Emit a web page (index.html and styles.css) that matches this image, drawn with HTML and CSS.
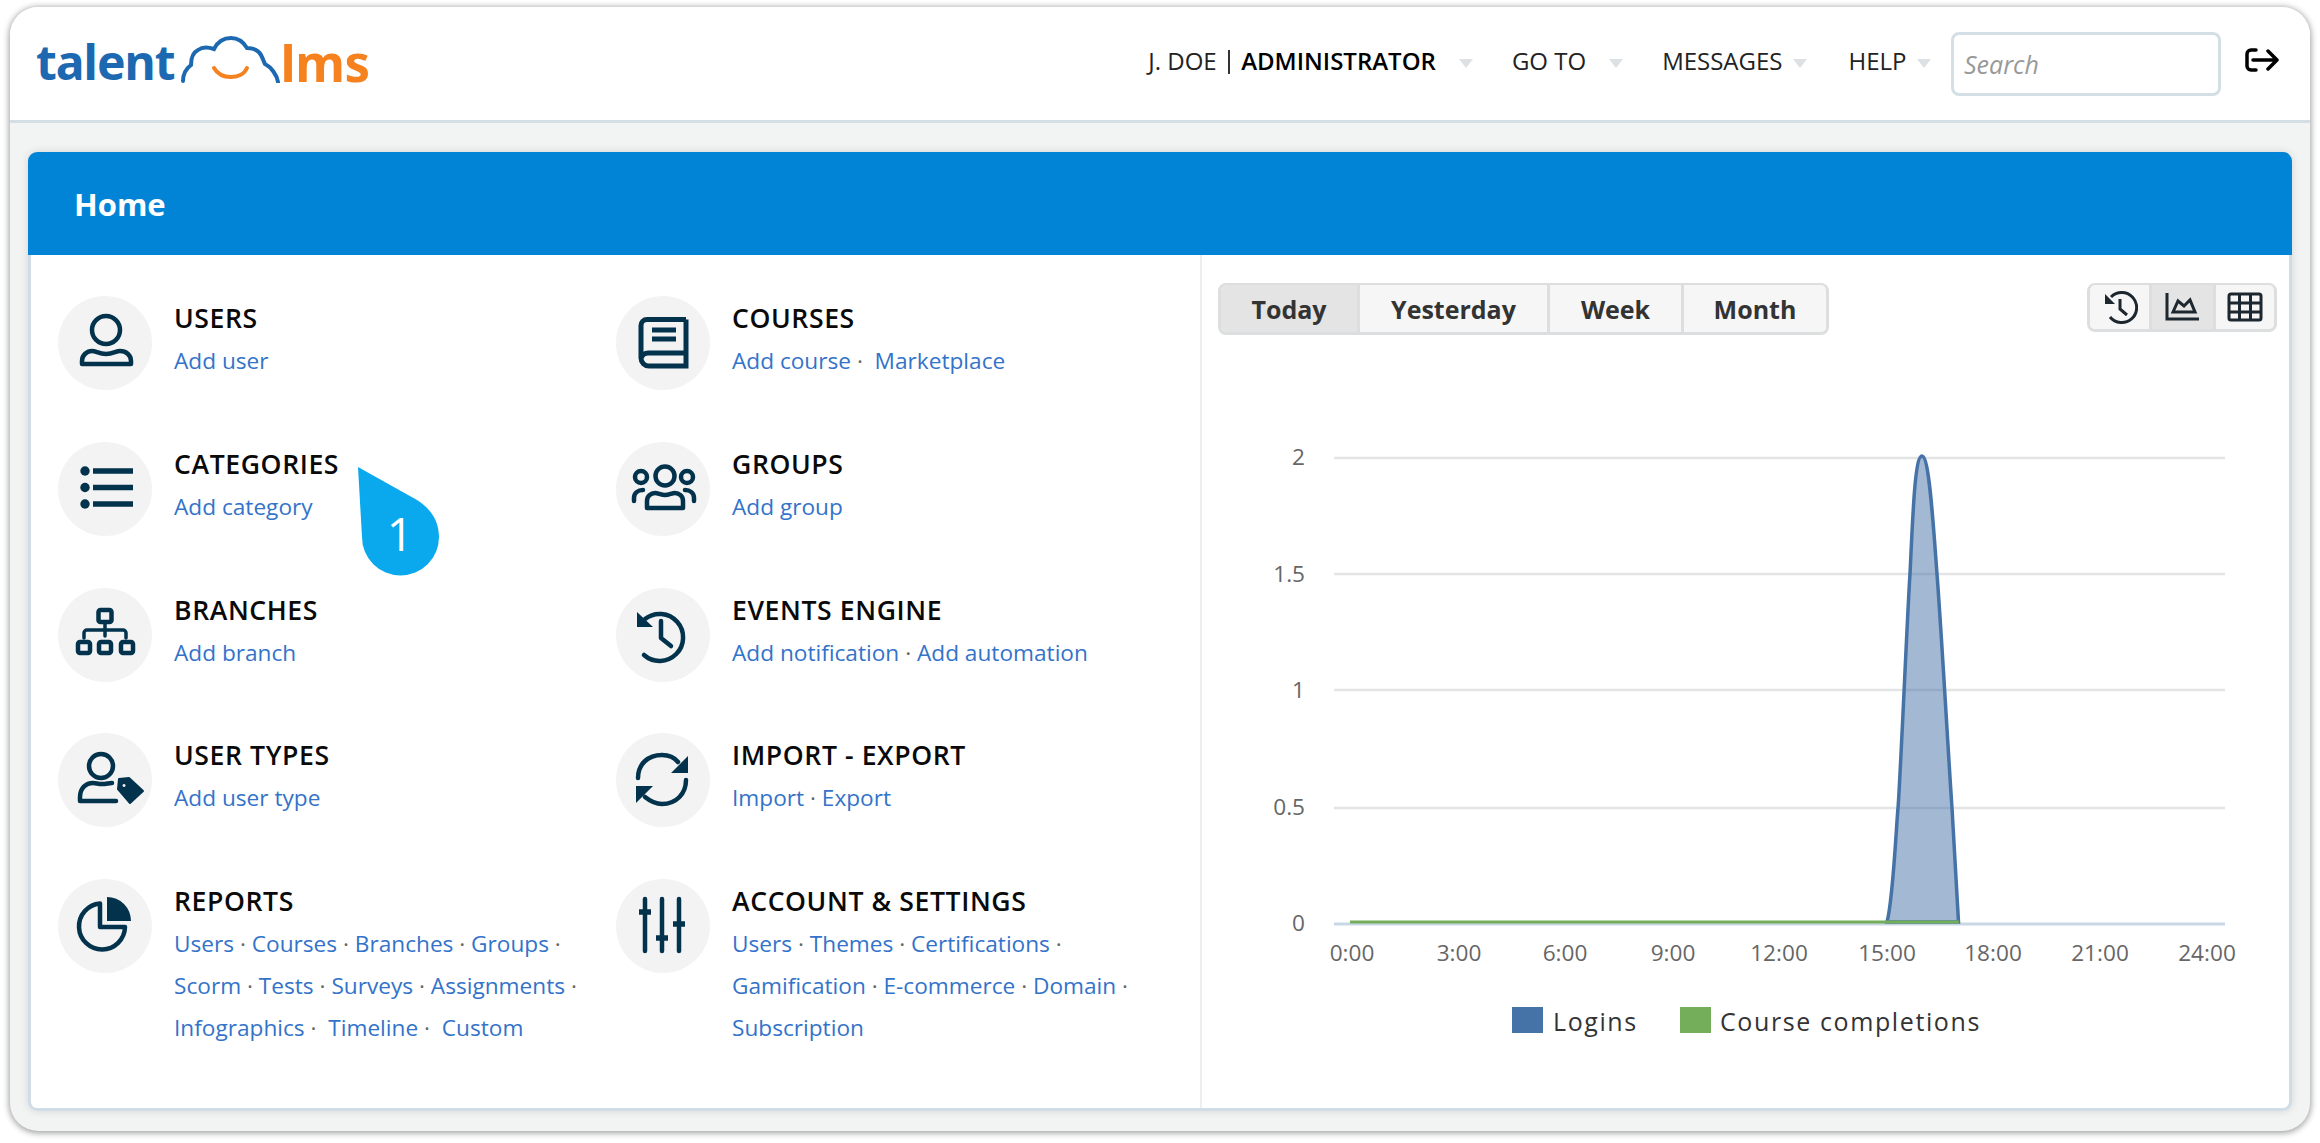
FILE: index.html
```html
<!DOCTYPE html>
<html lang="en">
<head>
<meta charset="utf-8">
<title>TalentLMS Home</title>
<link rel="stylesheet" href="styles.css">
</head>
<body>
<div class="window">
  <header class="topbar">
    <div class="logo">
      <span class="logo-talent">talent</span>
      <svg class="logo-cloud" viewBox="0 0 100 48" aria-hidden="true">
        <path class="cloud-line" d="M3 46C3 38 7 33 11 30C11 22 14 17 18 15C22 12 28 12 34 14C37 8 43 3 51 3C59 3 64 8 67 13C74 13 79 16 81 20C83 24 84 27 85 29C91 32 97 40 98 47"/>
        <path class="cloud-smile" d="M34 33C38 40 44 42 51 42S64 40 67 33"/>
      </svg>
      <span class="logo-lms">lms</span>
    </div>
    <nav class="nav">
      <span class="nav-item">J. DOE <i class="sep"></i> <b>ADMINISTRATOR</b></span><i class="caret far"></i>
      <span class="nav-item">GO TO</span><i class="caret far"></i>
      <span class="nav-item">MESSAGES</span><i class="caret"></i>
      <span class="nav-item">HELP</span><i class="caret last"></i>
      <input class="search" type="text" placeholder="Search">
      <svg class="logout" viewBox="0 0 34 24" aria-hidden="true"><path d="M11 2H6a4 4 0 0 0-4 4v12a4 4 0 0 0 4 4h5M8 12h24M23 3l9 9-9 9"/></svg>
    </nav>
  </header>

  <main class="content">
    <section class="panel">
      <h1 class="panel-title">Home</h1>
      <div class="panel-body">
        <div class="menu">
          <div class="cell">
            <span class="ico"><svg viewBox="0 0 94 94"><circle class="s" cx="48" cy="34" r="14"/><path class="s" d="M24 68v-3c0-6 5-10 10-10 4 0 7 3 14 3s10-3 14-3c6 0 11 4 11 10v3z"/></svg></span>
            <div class="txt"><h2>USERS</h2><p><a>Add user</a></p></div>
          </div>
          <div class="cell">
            <span class="ico"><svg viewBox="0 0 94 94"><path class="s book" d="M70 23.500H31a6 6 0 0 0-6 6V62a8 8 0 0 0 8 8H70V57H33a8 8 0 0 0-8 5M70 23.500V57"/><path class="s book" d="M36 34h24M36 43h24"/></svg></span>
            <div class="txt"><h2>COURSES</h2><p><a>Add course</a> ·&nbsp; <a>Marketplace</a></p></div>
          </div>
          <div class="cell">
            <span class="ico"><svg viewBox="0 0 94 94"><circle class="f" cx="27" cy="29" r="4.700"/><circle class="f" cx="27" cy="45.500" r="4.700"/><circle class="f" cx="27" cy="62" r="4.700"/><path class="s thick" d="M35 29h40M35 45.500h40M35 62h40"/></svg></span>
            <div class="txt"><h2>CATEGORIES</h2><p><a>Add category</a></p></div>
          </div>
          <div class="cell">
            <span class="ico"><svg viewBox="0 0 94 94"><circle class="s" cx="49" cy="34" r="9.500"/><circle class="s" cx="25" cy="35" r="6"/><circle class="s" cx="71" cy="35" r="6"/><path class="s" d="M31 66v-7c0-5 4-8 8-8 3 0 6 2 10 2s7-2 10-2c4 0 8 3 8 8v7zM18 59v-3c0-5 4-8 9-8M78 59v-3c0-5-4-8-9-8"/></svg></span>
            <div class="txt"><h2>GROUPS</h2><p><a>Add group</a></p></div>
          </div>
          <div class="cell">
            <span class="ico"><svg viewBox="0 0 94 94"><rect class="s" x="40.500" y="22" width="13" height="12" rx="2"/><rect class="s" x="20" y="54" width="12" height="11" rx="2"/><rect class="s" x="41" y="54" width="12" height="11" rx="2"/><rect class="s" x="63" y="54" width="12" height="11" rx="2"/><path class="s thin" d="M47 34v14M26 50v-5a3 3 0 0 1 3-3h36a3 3 0 0 1 3 3v5"/></svg></span>
            <div class="txt"><h2>BRANCHES</h2><p><a>Add branch</a></p></div>
          </div>
          <div class="cell">
            <span class="ico"><svg viewBox="0 0 94 94"><path class="s" d="M29 31a23.500 23.500 0 1 1-1 36"/><path class="f" d="M21 24v15h16z"/><path class="s" d="M45 33v17l10 8"/></svg></span>
            <div class="txt"><h2>EVENTS ENGINE</h2><p><a>Add notification</a> · <a>Add automation</a></p></div>
          </div>
          <div class="cell">
            <span class="ico"><svg viewBox="0 0 94 94"><circle class="s" cx="43" cy="33" r="12"/><path class="s" d="M58 68H22v-4c0-9 6-14 13-14 3 0 5 1 9 1s7-1 10-1"/><path class="f fr" fill-rule="evenodd" d="M61 46l10-1 14 13-13 12-12-14zM66 50a2.500 2.500 0 1 0 0.100 0z"/></svg></span>
            <div class="txt"><h2>USER TYPES</h2><p><a>Add user type</a></p></div>
          </div>
          <div class="cell">
            <span class="ico"><svg viewBox="0 0 94 94"><path class="s" d="M22 45c0-14 10-23 24-23 7 0 12 2 16 7M70 47c0 14-10 24-24 24-7 0-12-3-17-7"/><path class="f" d="M72 23v17H55zM20 70V53h17z"/></svg></span>
            <div class="txt"><h2>IMPORT - EXPORT</h2><p><a>Import</a> · <a>Export</a></p></div>
          </div>
          <div class="cell">
            <span class="ico"><svg viewBox="0 0 94 94"><path class="s" d="M42 24.500A23 23 0 1 0 67 48H42z"/><path class="f" d="M49 18a24 24 0 0 1 24 24H49z"/></svg></span>
            <div class="txt"><h2>REPORTS</h2><p><a>Users</a> · <a>Courses</a> · <a>Branches</a> · <a>Groups</a> · <a>Scorm</a> · <a>Tests</a> · <a>Surveys</a> · <a>Assignments</a> · <a>Infographics</a> ·&nbsp; <a>Timeline</a> ·&nbsp; <a>Custom</a></p></div>
          </div>
          <div class="cell">
            <span class="ico"><svg viewBox="0 0 94 94"><path class="s" d="M29 20v52M46 20v52M63 20v52"/><path class="s thick" d="M23 33h12M40 59h12M57 45h12"/></svg></span>
            <div class="txt"><h2>ACCOUNT &amp; SETTINGS</h2><p><a>Users</a> · <a>Themes</a> · <a>Certifications</a> · <a>Gamification</a> · <a>E-commerce</a> · <a>Domain</a> · <a>Subscription</a></p></div>
          </div>
        </div>

        <div class="stats">
          <div class="toolbar">
            <div class="btn-group">
              <button class="btn today active">Today</button>
              <button class="btn yesterday">Yesterday</button>
              <button class="btn week">Week</button>
              <button class="btn month">Month</button>
            </div>
            <div class="btn-group icons">
              <button class="btn tool t1"><svg viewBox="0 0 36 36"><path d="M9 8a15 15 0 1 1-1 20"/><path class="solid" d="M3 5v10h10z"/><path d="M18 10v10l7 6"/></svg></button>
              <button class="btn tool t2 active"><svg viewBox="0 -3 36 36"><path d="M2 1v26h32"/><path d="M8 20l5-11 6 5 6-6 5 12z"/></svg></button>
              <button class="btn tool t3"><svg viewBox="0 -3 36 36"><rect x="2" y="2" width="32" height="26" rx="2"/><path d="M12.500 2v26M23.500 2v26M2 11h32M2 20h32"/></svg></button>
            </div>
          </div>
          <svg class="chart" viewBox="1202 345 1087 740" aria-label="Logins and course completions today">
            <g class="grid"><path d="M1334 458h891M1334 574h891M1334 690h891M1334 808h891"/></g>
            <path class="baseline" d="M1334 924h891"/>
            <path class="area" d="M1887 922C1893 900 1896 830 1898 808S1908 600 1910 574C1913 510 1915 456 1922 456C1929 456 1933 520 1937 574C1942 640 1948 750 1952 808C1954 840 1956 880 1958.500 922Z"/>
            <path class="green" d="M1350 922H1959"/>
            <g class="ylabels">
              <text x="1305" y="465">2</text><text x="1305" y="582">1.5</text><text x="1305" y="698">1</text><text x="1305" y="815">0.5</text><text x="1305" y="931">0</text>
            </g>
            <g class="xlabels">
              <text x="1352" y="961">0:00</text><text x="1459" y="961">3:00</text><text x="1565" y="961">6:00</text><text x="1673" y="961">9:00</text><text x="1779" y="961">12:00</text><text x="1887" y="961">15:00</text><text x="1993" y="961">18:00</text><text x="2100" y="961">21:00</text><text x="2207" y="961">24:00</text>
            </g>
            <rect class="leg-blue" x="1512" y="1007" width="31" height="26"/>
            <text class="leg" x="1553" y="1031">Logins</text>
            <rect class="leg-green" x="1680" y="1007" width="31" height="26"/>
            <text class="leg" x="1720" y="1031">Course completions</text>
          </svg>
        </div>
      </div>
      <div class="tip">
        <svg viewBox="0 0 82 110" aria-hidden="true"><path d="M0 0L59 33C73 42 81 54 81 70A38.500 38.500 0 0 1 4 70Z"/></svg>
        <span class="tip-num">1</span>
      </div>
    </section>
  </main>
</div>
</body>
</html>
```
FILE: styles.css
```css
* { box-sizing: border-box; }
html, body { margin: 0; height: 100%; background: #fff; }
body { padding: 7px 10px 12px; font-family: "Open Sans", "Liberation Sans", sans-serif; color: #111; }

.window {
  height: 1124px;
  border-radius: 28px;
  overflow: hidden;
  background: #f2f3f3;
  display: flex;
  flex-direction: column;
  box-shadow: 0 1px 6px 1px rgba(0, 0, 0, .38);
}

.topbar {
  height: 116px;
  flex: none;
  background: #fff;
  border-bottom: 3px solid #d3dee5;
  display: flex;
  align-items: center;
  padding: 0 31px 0 26px;
}

.logo { display: flex; align-items: flex-start; height: 48px; margin-top: -10px; }
.logo-talent, .logo-lms { font-family: "Noto Sans", sans-serif; font-weight: 700; line-height: 48px; margin-top: 3px; }
.logo-talent { color: #1c69b2; font-size: 48px; letter-spacing: -1px; }
.logo-lms { color: #f5811f; font-size: 51px; letter-spacing: -.5px; margin-left: 1px; }
.logo-cloud { width: 100px; height: 48px; margin-left: 5px; }
.cloud-line { fill: none; stroke: #1c69b2; stroke-width: 4; stroke-linecap: round; }
.cloud-smile { fill: none; stroke: #f5811f; stroke-width: 4; stroke-linecap: round; }

.nav { margin-left: auto; display: flex; align-items: center; font-size: 24px; color: #222; }
.nav-item { white-space: nowrap; margin-top: -7px; }
.nav-item b { font-weight: 600; color: #000; }
.sep { display: inline-block; width: 2px; height: 24px; background: #333; vertical-align: -4px; margin: 0 5px; }
.caret { width: 0; height: 0; margin: 0 42px 0 10px; border-style: solid; border-width: 9px 7px 0; border-color: #dde1e4 transparent transparent; }
.caret.far { margin: 0 39px 0 23px; }
.caret.last { margin-right: 20.500px; }
.search { width: 270px; height: 64px; border: 3px solid #d3dee5; border-radius: 8px; padding: 0 10px; font: italic 25px "Open Sans", sans-serif; outline: 0; }
.search::placeholder { color: #999; opacity: 1; }
.logout { width: 34px; height: 24px; margin: -8px 0 0 24px; fill: none; stroke: #000; stroke-width: 3.500; stroke-linecap: round; stroke-linejoin: round; }

.content { flex: 1; min-height: 0; padding: 29px 18px 20px; display: flex; }
.panel { flex: 1; position: relative; display: flex; flex-direction: column; border-radius: 9px; background: #fff; box-shadow: 0 0 8px rgba(0, 0, 0, .12); }
.panel-title { margin: 0; height: 103px; flex: none; padding: 0 46px; line-height: 104px; background: #0284d6; color: #fff; font-size: 31px; font-weight: 700; border-radius: 9px 9px 0 0; }
.panel-body { flex: 1; min-height: 0; display: flex; border: solid #d0dde6; border-width: 0 3px 3px; border-radius: 0 0 9px 9px; }

.menu { width: 1169px; flex: none; padding: 41px 0 0 27px; display: grid; grid-template-columns: 558px 1fr; grid-auto-rows: 145.800px; align-content: start; }
.cell { display: flex; gap: 22px; min-width: 0; }
.ico { width: 94px; height: 94px; flex: none; border-radius: 50%; background: #f3f3f3; }
.ico svg { display: block; width: 94px; height: 94px; }
.s { fill: none; stroke: #03334c; stroke-width: 4.500; stroke-linecap: round; stroke-linejoin: round; }
.s.thick { stroke-width: 5.500; stroke-linecap: butt; }
.s.thin { stroke-width: 3.500; }
.s.book { stroke-width: 5; stroke-linecap: butt; stroke-linejoin: miter; }
.f { fill: #03334c; stroke: none; }
.f.fr { stroke: #03334c; stroke-width: 2; stroke-linejoin: round; }
.txt { min-width: 0; max-width: 420px; }
.txt h2 { margin: 0; font-size: 26.600px; font-weight: 600; letter-spacing: .6px; line-height: 44px; color: #0a0a0a; }
.txt p { margin: 0; font-size: 22.650px; line-height: 42px; color: #666; }
.txt a { color: #3373c9; }

.stats { flex: 1; min-width: 0; border-left: 2px solid #eceef0; display: flex; flex-direction: column; }
.toolbar { display: flex; justify-content: space-between; align-items: flex-start; padding: 28px 12px 0 16px; flex: none; }
.btn-group { display: flex; height: 52px; border: 3px solid #dcdedf; border-top-width: 2px; border-radius: 8px; overflow: hidden; background: #f6f6f6; }
.btn-group.icons { height: 49px; }
.btn { border: 0; border-left: 3px solid #dcdedf; background: #f6f6f6; padding: 0; font: 700 25px "Open Sans", sans-serif; color: #333; }
.btn:first-child { border-left: 0; }
.btn.active { background: #e4e4e4; }
.today { width: 136px; }
.yesterday { width: 190px; }
.week { width: 134px; }
.month { width: 145px; }
.tool { display: flex; align-items: center; justify-content: center; }
.t1 { width: 59px; }
.t2 { width: 64px; }
.t3 { width: 61px; }
.tool svg { width: 36px; height: 36px; fill: none; stroke: #1c2730; stroke-width: 3; }
.tool .solid { fill: #1c2730; stroke: none; }

.chart { display: block; width: 1087px; height: 740px; margin-top: 10px; overflow: visible; }
.grid path { stroke: #e2e4e6; stroke-width: 2.500; fill: none; }
.baseline { stroke: #c9d8e5; stroke-width: 3; fill: none; }
.area { fill: rgba(69, 114, 167, .5); stroke: #4572a7; stroke-width: 3.500; }
.green { stroke: #74ae5a; stroke-width: 3; fill: none; }
.ylabels text, .xlabels text { font-size: 22.600px; fill: #666; }
.ylabels text { text-anchor: end; }
.xlabels text { text-anchor: middle; }
.leg { font-size: 25px; fill: #333; letter-spacing: 1.600px; }
.leg-blue { fill: #4572a7; }
.leg-green { fill: #74ae5a; }

.tip { position: absolute; left: 330px; top: 315px; width: 82px; height: 110px; }
.tip svg { display: block; width: 82px; height: 110px; fill: #0aa8ec; }
.tip-num { position: absolute; left: 4px; right: 2px; bottom: 9px; height: 70px; line-height: 70px; text-align: center; font-size: 46px; font-weight: 400; color: #fff; }
```
